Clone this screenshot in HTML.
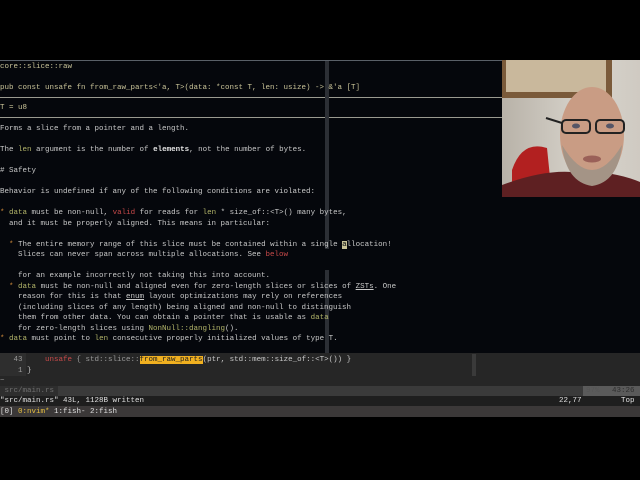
<!DOCTYPE html>
<html><head><meta charset="utf-8"><style>
*{margin:0;padding:0;box-sizing:border-box}
body{width:640px;height:480px;background:#000;overflow:hidden;position:relative;font-family:"Liberation Mono","DejaVu Sans Mono",monospace;font-size:7.5px;color:#c9c9c9}
.l{position:absolute;left:0;white-space:pre;line-height:10.5px;height:10.5px}
.y{color:#c9c398}.g{color:#b3b56a}.r{color:#c94a4a}.o{color:#d08a3a}.b{font-weight:bold;color:#e6e6e6}.d{color:#9a9a9a}
</style></head><body>
<div style="position:absolute;left:0;top:60px;width:640px;height:293px;background:#05070c;border-top:1px solid #5a6068"></div>
<div style="position:absolute;left:0;top:97px;width:502px;height:1px;background:#9a9a90"></div>
<div style="position:absolute;left:0;top:117px;width:502px;height:1px;background:#9a9a90"></div>
<div style="position:absolute;left:325px;top:61px;width:4px;height:188px;background:#2c2f35"></div>
<div style="position:absolute;left:325px;top:270px;width:4px;height:83px;background:#2c2f35"></div>
<div class="l y" style="top:62px">core::slice::raw</div>
<div class="l y" style="top:83px">pub const unsafe fn from_raw_parts&lt;'a, T&gt;(data: *const T, len: usize) -&gt; &amp;'a [T]</div>
<div class="l y" style="top:103px">T = u8</div>
<div class="l" style="top:124px">Forms a slice from a pointer and a length.</div>
<div class="l" style="top:145px">The <span class="g">len</span> argument is the number of <span class="b">elements</span>, not the number of bytes.</div>
<div class="l" style="top:166px"># Safety</div>
<div class="l" style="top:187px">Behavior is undefined if any of the following conditions are violated:</div>
<div class="l" style="top:208px"><span class="o">*</span> <span class="g">data</span> must be non-null, <span class="r">valid</span> for reads for <span class="g">len</span> * size_of::&lt;T&gt;() many bytes,</div>
<div class="l" style="top:218.5px">  and it must be properly aligned. This means in particular:</div>
<div class="l" style="top:239.5px">  <span class="o">*</span> The entire memory range of this slice must be contained within a single <span style="background:#c9c398;color:#05070c">a</span>llocation!</div>
<div class="l" style="top:250px">    Slices can never span across multiple allocations. See <span class="r">below</span></div>
<div class="l" style="top:271px">    for an example incorrectly not taking this into account.</div>
<div class="l" style="top:281.5px">  <span class="o">*</span> <span class="g">data</span> must be non-null and aligned even for zero-length slices or slices of <u>ZSTs</u>. One</div>
<div class="l" style="top:292px">    reason for this is that <u>enum</u> layout optimizations may rely on references</div>
<div class="l" style="top:302.5px">    (including slices of any length) being aligned and non-null to distinguish</div>
<div class="l" style="top:313px">    them from other data. You can obtain a pointer that is usable as <span class="g">data</span></div>
<div class="l" style="top:323.5px">    for zero-length slices using <span class="g">NonNull::dangling</span>().</div>
<div class="l" style="top:334px"><span class="o">*</span> <span class="g">data</span> must point to <span class="g">len</span> consecutive properly initialized values of type T.</div>
<div style="position:absolute;left:0;top:353px;width:640px;height:33px;background:#262626"></div>
<div style="position:absolute;left:0;top:353px;width:26px;height:23px;background:#2e2e2e"></div>
<div style="position:absolute;top:354px;width:4px;height:22px;background:#3a3a3a;left:472px"></div>
<div class="l d" style="top:355px">   43     <span style="color:#c94a4a">unsafe</span> { std::slice::<span style="background:#f0b020;color:#202020">from_raw_parts</span><span style="color:#c9c9c9">(ptr, std::mem::size_of::&lt;T&gt;()) }</span></div>
<div class="l" style="top:365.5px"><span class="d">    1 </span>}</div>
<div class="l d" style="top:376px">~</div>
<div style="position:absolute;left:0;top:386px;width:640px;height:10px;background:#3a3a3a"></div>
<div style="position:absolute;left:0;top:386px;width:58px;height:10px;background:#2e2e2e"></div>
<div style="position:absolute;left:583px;top:386px;width:57px;height:10px;background:#5a5a5a"></div>
<div class="l" style="top:386px;color:#707070"> src/main.rs</div>
<div class="l" style="top:386px;left:586px;color:#555">97%</div>
<div class="l" style="top:386px;left:612px;color:#2e2e2e">43:26</div>
<div style="position:absolute;left:0;top:396px;width:640px;height:10px;background:#1e1e1e"></div>
<div class="l" style="top:396px;color:#e0e0e0">"src/main.rs" 43L, 1128B written</div>
<div class="l" style="top:396px;left:559px;color:#e0e0e0">22,77</div>
<div class="l" style="top:396px;left:621px;color:#e0e0e0">Top</div>
<div style="position:absolute;left:0;top:406px;width:640px;height:11px;background:#3b3838"></div>
<div class="l" style="top:406.5px;color:#e0e0e0">[0] <span style="color:#e8c040">0:nvim*</span> 1:fish- 2:fish</div>
<div style="position:absolute;left:502px;top:60px;width:138px;height:137px;overflow:hidden;background:linear-gradient(90deg,#b8b2a8 0%,#d8d4cc 60%,#cfcac2 100%)">
<svg width="138" height="137" viewBox="0 0 138 137">
<rect x="0" y="0" width="110" height="38" fill="#7a5a3a"/>
<rect x="4" y="0" width="100" height="32" fill="#c9b89c"/>
<path d="M10 110 Q20 80 45 88 L50 137 L10 137Z" fill="#b22020"/>
<path d="M0 125 Q40 110 70 112 Q110 110 138 122 L138 137 L0 137Z" fill="#5e2022"/>
<ellipse cx="90" cy="75" rx="32" ry="48" fill="#c99c84"/>
<path d="M60 85 Q90 135 120 85 Q116 122 90 126 Q64 122 60 85Z" fill="#a49486"/>
<rect x="60" y="60" width="28" height="13" rx="4" fill="none" stroke="#222" stroke-width="2"/>
<rect x="94" y="60" width="28" height="13" rx="4" fill="none" stroke="#222" stroke-width="2"/>
<line x1="44" y1="58" x2="60" y2="63" stroke="#222" stroke-width="2"/>
<ellipse cx="74" cy="66" rx="4" ry="2.5" fill="#556"/>
<ellipse cx="108" cy="66" rx="4" ry="2.5" fill="#556"/>
<ellipse cx="90" cy="99" rx="9" ry="3.5" fill="#9a6058"/>
</svg></div>
</body></html>
